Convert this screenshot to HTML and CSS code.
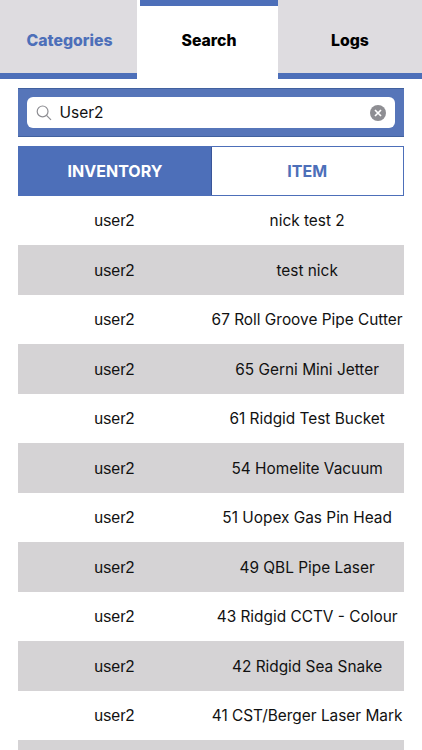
FILE: index.html
```html
<!DOCTYPE html>
<html lang="en">
<head>
    <meta charset="UTF-8">
    <meta name="viewport" content="width=device-width, initial-scale=1.0">
    <title>Search Inventory</title>
    <link rel="stylesheet" href="styles.css">
</head>
<body>
    <nav class="tabs">
        <a class="tab tab-categories">Categories</a>
        <a class="tab active">Search</a>
        <a class="tab tab-logs">Logs</a>
    </nav>

    <main class="content">
        <div class="search-bar">
            <div class="search-field">
                <svg class="search-icon" viewBox="0 0 16 16">
                    <circle cx="6.6" cy="6.4" r="5.4" />
                    <path d="M10.5 10.3 L15 14.8" />
                </svg>
                <span class="search-text">User2</span>
                <svg class="clear-icon" viewBox="0 0 16 16">
                    <circle cx="8" cy="8" r="8" />
                    <path d="M5 5 L11 11 M11 5 L5 11" />
                </svg>
            </div>
        </div>

        <div class="toggle">
            <div class="toggle-option selected">INVENTORY</div>
            <div class="toggle-option">ITEM</div>
        </div>

        <div class="results">
            <div class="row"><span class="owner">user2</span><span class="item">nick test 2</span></div>
            <div class="row"><span class="owner">user2</span><span class="item">test nick</span></div>
            <div class="row"><span class="owner">user2</span><span class="item">67 Roll Groove Pipe Cutter</span></div>
            <div class="row"><span class="owner">user2</span><span class="item">65 Gerni Mini Jetter</span></div>
            <div class="row"><span class="owner">user2</span><span class="item">61 Ridgid Test Bucket</span></div>
            <div class="row"><span class="owner">user2</span><span class="item">54 Homelite Vacuum</span></div>
            <div class="row"><span class="owner">user2</span><span class="item">51 Uopex Gas Pin Head</span></div>
            <div class="row"><span class="owner">user2</span><span class="item">49 QBL Pipe Laser</span></div>
            <div class="row"><span class="owner">user2</span><span class="item">43 Ridgid CCTV - Colour</span></div>
            <div class="row"><span class="owner">user2</span><span class="item">42 Ridgid Sea Snake</span></div>
            <div class="row"><span class="owner">user2</span><span class="item">41 CST/Berger Laser Mark</span></div>
            <div class="row"></div>
        </div>
    </main>
</body>
</html>
```

FILE: styles.css
```css
* {
    box-sizing: border-box;
}

body {
    display: flex;
    flex-direction: column;
    margin: 0;
    height: 750px;
    overflow: hidden;
    background-color: #fff;
    color: #111;
    font-family: Inter, sans-serif;
    font-size: 16px;
}

.tabs {
    display: flex;
    flex: none;
    height: 79px;
}

.tab {
    display: flex;
    align-items: center;
    justify-content: center;
    flex: 1;
    padding-top: 7px;
    border-bottom: 6px solid #4d6fb9;
    background-color: #dedce0;
    color: #000;
    font-size: 15.8px;
    font-weight: 800;
}

.tab-categories {
    flex: 0 0 137px;
    padding-left: 2px;
    color: #4d6fb9;
}

.tab.active {
    flex: 0 0 138px;
    margin-left: 3px;
    padding: 0 0 5px;
    border-top: 6px solid #4d6fb9;
    border-bottom: none;
    background-color: #fff;
}

.content {
    display: flex;
    flex-direction: column;
    flex: 1;
    min-height: 0;
    width: 385.5px;
    margin: 9px 0 0 18px;
}

.search-bar {
    flex: none;
    height: 49px;
    padding: 8px 9px;
    border-top: 1px solid #41619f;
    border-bottom: 1px solid #41619f;
    background-color: #5675b9;
}

.search-field {
    display: flex;
    align-items: center;
    height: 31px;
    padding: 0 9px;
    border-radius: 6px;
    background-color: #fff;
}

.search-icon {
    width: 16px;
    height: 16px;
    fill: none;
    stroke: #8e8e93;
    stroke-width: 1.2;
}

.search-text {
    flex: 1;
    margin-left: 7.5px;
    padding-bottom: 1px;
    font-size: 15.5px;
}

.clear-icon {
    width: 16px;
    height: 16px;
    fill: #8e8e93;
    stroke: none;
}

.clear-icon path {
    stroke: #fff;
    stroke-width: 1.7;
}

.toggle {
    display: flex;
    flex: none;
    height: 49.5px;
    margin-top: 9px;
    border: 1px solid #4d6fb9;
}

.toggle-option {
    display: flex;
    align-items: center;
    justify-content: center;
    flex: 1;
    color: #4d6fb9;
    font-weight: 700;
}

.toggle-option.selected {
    flex: 0 0 193px;
    border-right: 1px solid #3a5598;
    background-color: #4d6fb9;
    color: #fff;
}

.results {
    flex: 1;
    min-height: 0;
    overflow: hidden;
}

.row {
    display: grid;
    grid-template-columns: 1fr 1fr;
    align-items: center;
    height: 49.5px;
    padding-top: 1px;
    text-align: center;
    white-space: nowrap;
}

.row:nth-child(even) {
    background-color: #d5d3d5;
}

.owner {
    padding-top: 1px;
    font-family: "Liberation Sans", Arial, sans-serif;
}

.item {
    font-size: 15.4px;
}
```
